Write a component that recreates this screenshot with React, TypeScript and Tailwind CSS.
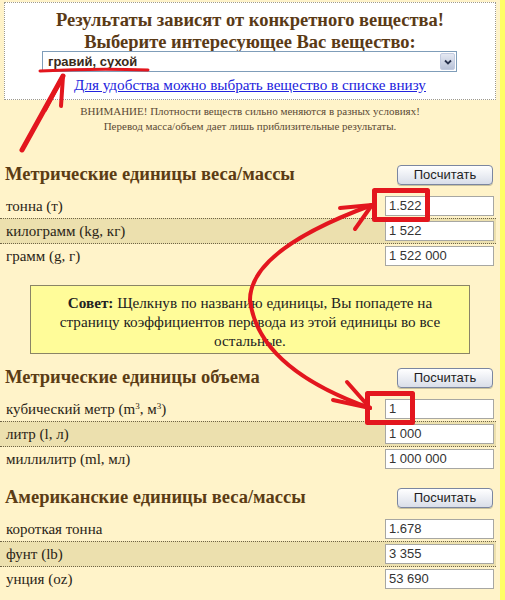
import React from "react";

type Unit = { label: React.ReactNode; value: string };

type Section = { title: string; units: Unit[] };

const sections: Section[] = [
  {
    title: "Метрические единицы веса/массы",
    units: [
      { label: "тонна (т)", value: "1.522" },
      { label: "килограмм (kg, кг)", value: "1 522" },
      { label: "грамм (g, г)", value: "1 522 000" },
    ],
  },
  {
    title: "Метрические единицы объема",
    units: [
      {
        label: (
          <>
            кубический метр (m<sup className="text-[9px]">3</sup>, м<sup className="text-[9px]">3</sup>)
          </>
        ),
        value: "1",
      },
      { label: "литр (l, л)", value: "1 000" },
      { label: "миллилитр (ml, мл)", value: "1 000 000" },
    ],
  },
  {
    title: "Американские единицы веса/массы",
    units: [
      { label: "короткая тонна", value: "1.678" },
      { label: "фунт (lb)", value: "3 355" },
      { label: "унция (oz)", value: "53 690" },
    ],
  },
];

const CalcButton = () => (
  <button className="font-['Liberation_Sans'] w-[96px] h-[20px] rounded-[4px] border border-[#7b86a0] bg-gradient-to-b from-white to-[#d9dee9] text-[13px] leading-[18px] text-[#1e1e1e] shadow-[0_1px_0_#c9c2a0]">
    Посчитать
  </button>
);

const UnitRow = ({ unit, middle }: { unit: Unit; middle: boolean }) => (
  <div
    className={
      middle
        ? "h-[26px] flex items-center justify-between pl-[6px] pr-[2px] bg-[#ECE0AE] border-y border-dotted border-[#6f6447]"
        : "h-[24px] flex items-center justify-between pl-[6px] pr-[2px]"
    }
  >
    <span className="font-['Liberation_Serif'] text-[15px] text-[#2a2416] leading-none">{unit.label}</span>
    <div className="font-['Liberation_Sans'] w-[109px] h-[20px] border border-[#a7a7a3] bg-white pl-[3px] text-[13px] leading-[18px] text-[#333]">
      {unit.value}
    </div>
  </div>
);

const UnitSection = ({ section, className }: { section: Section; className: string }) => (
  <div className={className}>
    <div className="h-[28px] flex items-center justify-between pl-[5px] pr-[3px]">
      <h2 className="font-['Liberation_Serif'] text-[18.5px] font-bold text-[#5b3c14]">{section.title}</h2>
      <CalcButton />
    </div>
    <div className="mt-[5px]">
      {section.units.map((u, i) => (
        <UnitRow key={i} unit={u} middle={i === 1} />
      ))}
    </div>
  </div>
);

export default function App() {
  return (
    <div className="relative w-[505px] h-[600px] overflow-hidden bg-[#FFF3C9] flex font-['Liberation_Serif']">
      <div className="w-[500px]">
        {/* substance picker */}
        <div className="mx-[4px] mt-[2px] h-[98px] border border-dotted border-[#9d9a8e] bg-white flex flex-col items-center">
          <div className="font-['Liberation_Serif'] h-[42px] mt-[6px] text-[18.5px] leading-[22px] font-bold text-[#5a3a16] text-center">
            <div>Результаты зависят от конкретного вещества!</div>
            <div>Выберите интересующее Вас вещество:</div>
          </div>
          <div className="self-start ml-[37px] w-[415px] h-[21px] border border-[#7f9db9] bg-white flex items-center">
            <span className="font-['Liberation_Sans'] flex-1 pl-[5px] text-[13px] font-bold text-[#3a2a18]">
              гравий, сухой
            </span>
            <div className="w-[15px] h-[17px] mr-[1px] rounded-[2px] bg-gradient-to-b from-[#e4e8f2] to-[#b8c2d8] border border-[#c2cbe0] flex items-center justify-center">
              <svg width="8" height="6" viewBox="0 0 8 6">
                <path d="M1 1.5 L4 4.5 L7 1.5" fill="none" stroke="#27314d" strokeWidth="1.8" />
              </svg>
            </div>
          </div>
          <a className="font-['Liberation_Serif'] mt-[4px] text-[15.2px] leading-[18px] text-[#2222dd] underline">
            Для удобства можно выбрать вещество в списке внизу
          </a>
        </div>

        <div className="font-['Liberation_Serif'] mt-[4px] text-[11px] leading-[15px] text-center text-[#5b4a35]">
          <div>ВНИМАНИЕ! Плотности веществ сильно меняются в разных условиях!</div>
          <div>Перевод масса/объем дает лишь приблизительные результаты.</div>
        </div>

        <div className="w-[496px]">
          <UnitSection section={sections[0]} className="mt-[27px]" />

          <div className="font-['Liberation_Serif'] mt-[17px] ml-[30px] w-[440px] border border-[#8a8466] bg-[#FFFC99] pt-[7px] pb-[3px] text-center text-[15.2px] leading-[19px] text-[#222]">
            <b>Совет:</b> Щелкнув по названию единицы, Вы попадете на
            <br />
            страницу коэффициентов перевода из этой единицы во все
            <br />
            остальные.
          </div>

          <UnitSection section={sections[1]} className="mt-[10px]" />
          <UnitSection section={sections[2]} className="mt-[13px]" />
        </div>
      </div>
      <div className="w-[5px] bg-[#FFFF66]" />

      {/* red hand-drawn annotations */}
      <svg
        className="absolute inset-0 pointer-events-none"
        width="505"
        height="600"
        viewBox="0 0 505 600"
        fill="none"
        stroke="#E3161E"
        strokeLinecap="round"
        strokeLinejoin="round"
      >
        <path d="M40 71 Q95 68 148 70" strokeWidth="3" />
        <path d="M22 150 L63 76" strokeWidth="5" />
        <path d="M63 76 L45 110" strokeWidth="4" />
        <path d="M63 76 L61 106" strokeWidth="4" />

        <rect x="374.5" y="190.5" width="53" height="29" strokeWidth="5" />
        <rect x="367.5" y="393.5" width="45" height="29" strokeWidth="5" />

        <path d="M372 205 Q250 250 250 300 Q258 368 370 408" strokeWidth="4" />
        <path d="M372 205 L340 208" strokeWidth="4" />
        <path d="M372 205 L355 229" strokeWidth="4" />
        <path d="M370 408 L347 382" strokeWidth="4" />
        <path d="M370 408 L333 400" strokeWidth="4" />
      </svg>
    </div>
  );
}
